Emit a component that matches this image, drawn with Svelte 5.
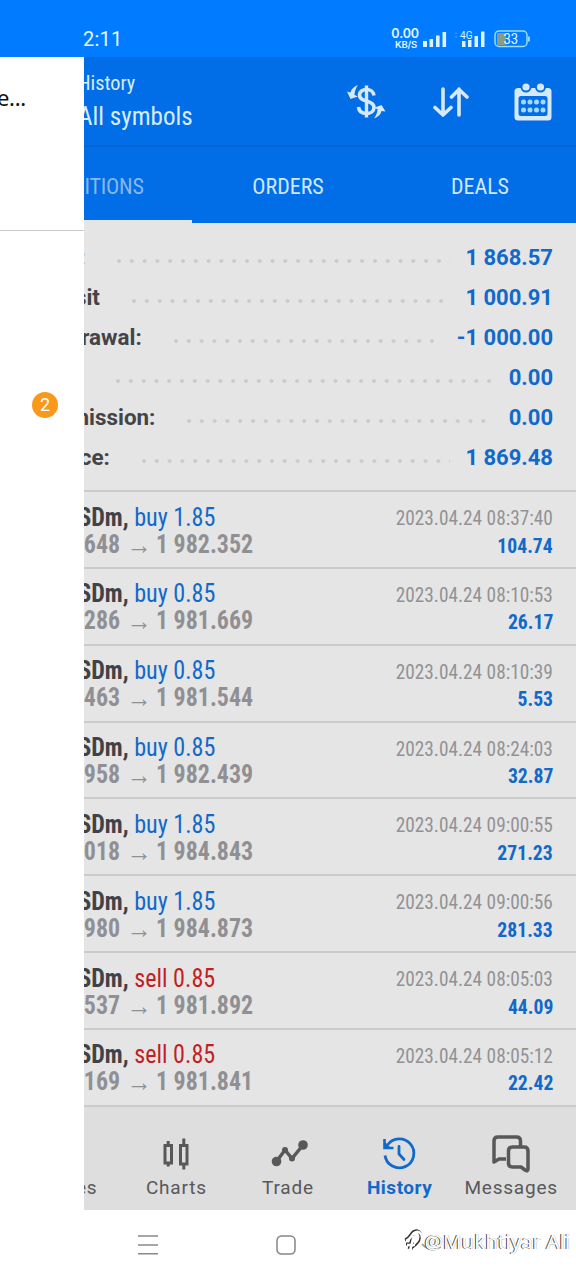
<script lang="ts">
  const totals = [
    { label: 'Profit:', value: '1 868.57' },
    { label: 'Deposit', value: '1 000.91' },
    { label: 'Withdrawal:', value: '-1 000.00' },
    { label: 'Swap:', value: '0.00' },
    { label: 'Commission:', value: '0.00' },
    { label: 'Balance:', value: '1 869.48' },
  ];

  const deals = [
    { side: 'buy', volume: '1.85', open: '1 981.648', close: '1 982.352', time: '2023.04.24 08:37:40', profit: '104.74' },
    { side: 'buy', volume: '0.85', open: '1 981.286', close: '1 981.669', time: '2023.04.24 08:10:53', profit: '26.17' },
    { side: 'buy', volume: '0.85', open: '1 981.463', close: '1 981.544', time: '2023.04.24 08:10:39', profit: '5.53' },
    { side: 'buy', volume: '0.85', open: '1 981.958', close: '1 982.439', time: '2023.04.24 08:24:03', profit: '32.87' },
    { side: 'buy', volume: '1.85', open: '1 983.018', close: '1 984.843', time: '2023.04.24 09:00:55', profit: '271.23' },
    { side: 'buy', volume: '1.85', open: '1 982.980', close: '1 984.873', time: '2023.04.24 09:00:56', profit: '281.33' },
    { side: 'sell', volume: '0.85', open: '1 982.537', close: '1 981.892', time: '2023.04.24 08:05:03', profit: '44.09' },
    { side: 'sell', volume: '0.85', open: '1 982.169', close: '1 981.841', time: '2023.04.24 08:05:12', profit: '22.42' },
  ];

  const tabs = ['POSITIONS', 'ORDERS', 'DEALS'];
  const pages = ['Quotes', 'Charts', 'Trade', 'History', 'Messages'];
</script>

<div class="phone">
  <div class="status">
    <span class="clock">2:11</span>
    <div class="speed"><b>0.00</b><small>KB/S</small></div>
    <svg class="signal" width="24" height="18" viewBox="0 0 24 18" fill="#d9f4ff">
      <path d="M0 11h4v6H0zM6.500 9h3.600v8H6.500zM13 5.500h3.600V17H13zM19.500 2h3.600v15h-3.600z" />
    </svg>
    <svg class="signal-4g" width="33" height="20" viewBox="0 0 33 20" fill="#d9f4ff">
      <path d="M10 12h3.500v6H10zM16 11h3.500v7H16zM22.500 7H26v11h-3.500zM29 2.500h3.500V18H29z" />
      <text x="8" y="9.500" font-size="11.500" textLength="12.500" lengthAdjust="spacingAndGlyphs">4G</text>
      <path opacity=".2" d="M2 5l2-2 2 2zM2 7l2 2 2-2z" />
    </svg>
    <svg width="37" height="18" viewBox="0 0 37 18">
      <path fill="#879e83" d="M3 3h9v12H3z" />
      <rect x="1" y="1" width="32" height="15.500" rx="4" fill="none" stroke="#9bdcff" stroke-width="1.500" />
      <path fill="#9bdcff" d="M34 6.500h1.800v5H34z" />
      <text x="9.500" y="13.800" font-size="14" fill="#e6f8ff" textLength="14.500" lengthAdjust="spacingAndGlyphs">33</text>
    </svg>
  </div>

  <main>
    <header>
      <div class="title">
        <h2>History</h2>
        <h1>All symbols</h1>
      </div>
      <svg width="40" height="40" viewBox="0 0 40 40" fill="none" stroke="#d7e8f8">
        <path stroke-width="3.400" d="M20.500 3.500v32" />
        <path stroke-width="3.600" d="M28 13.500c-.5-4-4-6-7.500-6-4 0-7 2-7 5.500s3 5 7 6c4.500 1.200 7.500 2.800 7.500 6.500s-3.500 6-7.500 6S13 29.500 12.500 25" />
        <path stroke="none" fill="#d7e8f8" d="M12 3C7.500 4.500 5 7.500 4.500 10.500L1 9.500l3.500 7.500 7.500-2.500-3.500-1.500c0-4 1.500-7 3.500-10zM28 36.500c4.500-1.500 7-4.500 7.500-7.500l4 .5-4-6.500-8 3 4 1c0 3.500-1.500 6.500-3.500 9.500z" />
      </svg>
      <svg width="38" height="34" viewBox="0 0 38 34" fill="none" stroke="#d7e8f8" stroke-width="3.600" stroke-linecap="round" stroke-linejoin="round">
        <path d="M12 4v26M4 22.500l8 7.500 8-7.500M28 30V4M20.500 12L28 4.500l8 7.500" />
      </svg>
      <svg width="38" height="38" viewBox="0 0 38 38">
        <rect x=".5" y="5" width="37" height="32.500" rx="3.500" fill="#d7e8f8" />
        <rect x="4.500" y="13" width="29" height="20" rx="2.500" fill="#016ee8" />
        <circle cx="12" cy="4" r="5.500" fill="#016ee8" />
        <circle cx="26.500" cy="4" r="5.500" fill="#016ee8" />
        <circle cx="12" cy="4" r="3.600" fill="#d7e8f8" />
        <circle cx="26.500" cy="4" r="3.600" fill="#d7e8f8" />
        {#each [9.5, 16, 22.5, 29] as cx}
          <circle {cx} cy="19" r="2.500" fill="#a9d8ff" />
          <circle {cx} cy="27" r="2.500" fill="#a9d8ff" />
        {/each}
      </svg>
    </header>

    <div class="tabs">
      {#each tabs as tab, index}
        <div class="tab" class:current={index === 0}><span>{tab}</span></div>
      {/each}
    </div>

    <section class="totals">
      {#each totals as total}
        <div class="total">
          <span class="label">{total.label}</span>
          <span class="dots"></span>
          <span class="value">{total.value}</span>
        </div>
      {/each}
    </section>

    <section class="deals">
      {#each deals as deal}
        <article>
          <div class="line">
            <span class="symbol">XAUUSDm, <span class={deal.side}>{deal.side} {deal.volume}</span></span>
            <span class="time">{deal.time}</span>
          </div>
          <div class="line">
            <span class="prices">{deal.open} <i>→</i> {deal.close}</span>
            <span class="profit">{deal.profit}</span>
          </div>
        </article>
      {/each}
    </section>

    <nav>
      {#each pages as page}
        <div class="page" class:active={page === 'History'}>
          <svg width="40" height="40" viewBox="0 0 40 40" fill="none" stroke="currentColor" stroke-width="3.200">
            {#if page === 'Charts'}
              <path stroke-width="3" d="M9 12.500h6.500v17.500H9zM24.500 12.500h6.500v18.500h-6.500zM12.200 8v4M12.200 30v3.500M27.800 5.500v7M27.800 31v5.500" />
            {:else if page === 'Trade'}
              <path stroke-width="3.500" d="M8.500 28.500L17 17l7 8.500L35 12" />
              <g fill="currentColor" stroke="none">
                <circle cx="8.500" cy="28.500" r="4.800" />
                <circle cx="17" cy="17" r="3" />
                <circle cx="24" cy="25.500" r="3" />
                <circle cx="35" cy="12" r="4.800" />
              </g>
            {:else if page === 'History'}
              <path stroke-width="2.800" d="M5 22.500A14.500 14.500 0 1 0 7.500 12" />
              <path stroke-width="2.600" d="M4.500 6v9h9" />
              <path fill="currentColor" stroke="none" d="M4 8l8 8H4z" />
              <path stroke-width="2.800" stroke-linecap="round" d="M19 13.500v7.500l5 5.500" />
            {:else if page === 'Messages'}
              <path stroke-linejoin="round" stroke-width="3.500" d="M15 26H8L3 29V8q0-4 4-4h18.500q4 0 4 4v5" />
              <path stroke-linejoin="round" stroke-width="3.500" d="M21.500 14H33q4 0 4 4v18q0 3-3 1l-4-3h-8.500q-4 0-4-4V18q0-4 4-4z" />
            {:else}
              <path d="M12 6v26M6 12l6-6 6 6M28 34V8M22 28l6 6 6-6" />
            {/if}
          </svg>
          <span>{page}</span>
        </div>
      {/each}
    </nav>
  </main>

  <!-- the open drawer covers the left part of the page -->
  <aside>
    <div class="account">e...</div>
    <span class="badge">2</span>
  </aside>

  <footer>
    <svg width="20" height="20" viewBox="0 0 20 20" stroke="#8a8a8a" stroke-width="1.600">
      <path d="M0 1h20M0 10h20M0 18.800h20" />
    </svg>
    <svg width="20" height="20" viewBox="0 0 20 20" fill="none" stroke="#858585" stroke-width="1.500">
      <rect x="1" y="1" width="18" height="18" rx="4.500" />
    </svg>
    <div class="watermark">
      <svg width="42" height="26" viewBox="0 0 42 26" fill="none">
        <path stroke="#999" stroke-width="1.500" d="M20 16c4 5 12 8 19 3" />
        <path stroke="#333" stroke-width="3" d="M3 12c4-1 5-5 8-8 4-3 8 0 8 5s-3 8-9 12M11 7c-2 5-2 9-4 14M4 16h8" />
        <path stroke="#fff" stroke-width="2.500" d="M4 13c4-1 5-5 8-8 4-3 8 0 8 5s-3 8-9 12M12 8c-2 5-2 9-4 14M5 17h8" />
      </svg>
      <span>@Mukhtiyar Ali</span>
    </div>
  </footer>
</div>

<style>
  :global(body) {
    background: #fff;
  }

  .phone {
    position: relative;
    width: 576px;
    height: 1280px;
    overflow: hidden;
    font-family: Roboto, "Liberation Sans", sans-serif;
  }

  .status {
    display: flex;
    align-items: center;
    box-sizing: border-box;
    height: 57px;
    padding: 20px 45px 0 83px;
    background: #017bff;
    color: #e2f7ff;
  }

  .clock {
    flex: 1;
    font-size: 20px;
    letter-spacing: 0.2px;
  }

  .speed {
    display: flex;
    flex-direction: column;
    align-items: flex-end;
    width: 30px;
    font-family: Inter, sans-serif;
    font-weight: 600;
  }

  .speed b {
    font-size: 12.5px;
    font-weight: 600;
    line-height: 12px;
    letter-spacing: -0.1px;
  }

  .speed small {
    padding-right: 2px;
    font-size: 9.5px;
    line-height: 9px;
    letter-spacing: -0.2px;
  }

  .signal {
    margin-left: 4px;
  }

  .signal-4g {
    margin: 0 9px 0 5px;
  }

  main {
    height: 1153px;
    background: #e5e5e5;
  }

  header {
    display: flex;
    align-items: center;
    box-sizing: border-box;
    height: 90px;
    padding: 2px 24px 0 78px;
    background: #016ee8;
    border-bottom: 2px solid #0764d2;
    color: #d7ecfc;
  }

  .title {
    flex: 1;
  }

  header > svg + svg {
    margin-left: 45px;
  }

  h1,
  h2,
  .tab,
  .deals {
    font-family: "Roboto Condensed", Roboto, sans-serif;
    font-stretch: 75%;
    font-weight: 400;
  }

  h1,
  h2 {
    margin: 0;
    transform: scaleX(0.965);
    transform-origin: left;
  }

  h2 {
    font-size: 21px;
    line-height: 29px;
  }

  h1 {
    font-size: 26px;
    line-height: 37px;
  }

  .tabs {
    display: flex;
    height: 76px;
    background: #016ee8;
  }

  .tab {
    display: flex;
    flex: 1;
    align-items: center;
    justify-content: center;
    box-sizing: border-box;
    padding-top: 2px;
    font-size: 22px;
    color: #cfe8fc;
  }

  .current {
    border-bottom: 3px solid #e5e5e5;
    padding-top: 5px;
    letter-spacing: -0.2px;
    color: #8bb7e6;
  }

  .totals {
    box-sizing: border-box;
    height: 267px;
    padding: 14px 23px 0;
  }

  .total {
    display: flex;
    align-items: center;
    height: 40px;
    font-size: 22.4px;
    font-weight: 700;
    color: #444447;
  }

  .dots {
    flex: 1;
    height: 4px;
    margin: 8px 15px 0 32px;
    background: radial-gradient(circle at 2px 2px, #cbcbcb 1.5px, transparent 2.2px) 0 0 / 12.8px 4px repeat-x;
  }

  .value {
    font-size: 22px;
    color: #1169c9;
  }

  article {
    box-sizing: border-box;
    height: 76.85px;
    padding: 11px 23px 0;
    border-top: 2px solid #cbcbcd;
  }

  .line {
    display: flex;
    justify-content: space-between;
    align-items: center;
    height: 27px;
  }

  .symbol {
    font-size: 26px;
    font-weight: 700;
    color: #424246;
    transform: scaleX(0.9275);
    transform-origin: left;
  }

  .buy,
  .sell {
    font-weight: 400;
    color: #1169c9;
  }

  .sell {
    color: #c01f24;
  }

  .time {
    padding-top: 3px;
    font-size: 21px;
    color: #929295;
    transform: scaleX(0.92);
    transform-origin: right;
  }

  .prices {
    padding-top: 1px;
    font-size: 25px;
    font-weight: 700;
    color: #909094;
    transform: scaleX(0.957);
    transform-origin: left;
  }

  .prices i {
    display: inline-block;
    margin: 0 0 0 3px;
    font-style: normal;
    font-weight: 400;
    font-size: 23px;
    line-height: 20px;
    transform: scale(1.15);
  }

  .profit {
    padding-top: 4px;
    font-size: 20.5px;
    font-weight: 700;
    color: #1169c9;
    transform: scaleX(0.96);
    transform-origin: right;
  }

  nav {
    display: flex;
    box-sizing: border-box;
    height: 105px;
    padding: 26px 9px 0 9px;
    background: #dedede;
    border-top: 2px solid #cbcbcd;
  }

  .page {
    display: flex;
    flex: 1 1 0;
    min-width: 0;
    flex-direction: column;
    align-items: center;
    font-size: 19px;
    letter-spacing: 0.8px;
    color: #58585a;
  }

  .page span {
    margin-top: 3px;
  }

  .active {
    font-weight: 700;
    letter-spacing: 0.5px;
    color: #1169c9;
  }

  aside {
    position: absolute;
    left: 0;
    top: 57px;
    width: 84px;
    height: 1153px;
    background: #fff;
  }

  .account {
    box-sizing: border-box;
    height: 174px;
    padding-top: 26px;
    border-bottom: 1.5px solid #c9c9c9;
    font-family: "Noto Sans", sans-serif;
    font-size: 22px;
    line-height: 28px;
    text-indent: -3px;
    letter-spacing: -0.3px;
    color: #111;
  }

  .badge {
    display: block;
    width: 26px;
    height: 26px;
    margin: 161px 0 0 32px;
    border-radius: 50%;
    background: #f8991d;
    color: #fff;
    font-size: 18px;
    line-height: 26px;
    text-align: center;
  }

  footer {
    position: relative;
    display: flex;
    gap: 118px;
    box-sizing: border-box;
    height: 70px;
    padding: 25px 0 0 138px;
  }

  .watermark {
    position: absolute;
    right: 6px;
    top: 17px;
    display: flex;
    align-items: center;
    font-family: "Noto Sans", sans-serif;
    font-size: 20.5px;
    color: #fff;
    text-shadow: -1px -0.5px 0.5px #444, 0.5px 0 0.5px #bbb;
    white-space: nowrap;
  }

  .watermark svg {
    margin-right: -19px;
  }
</style>
